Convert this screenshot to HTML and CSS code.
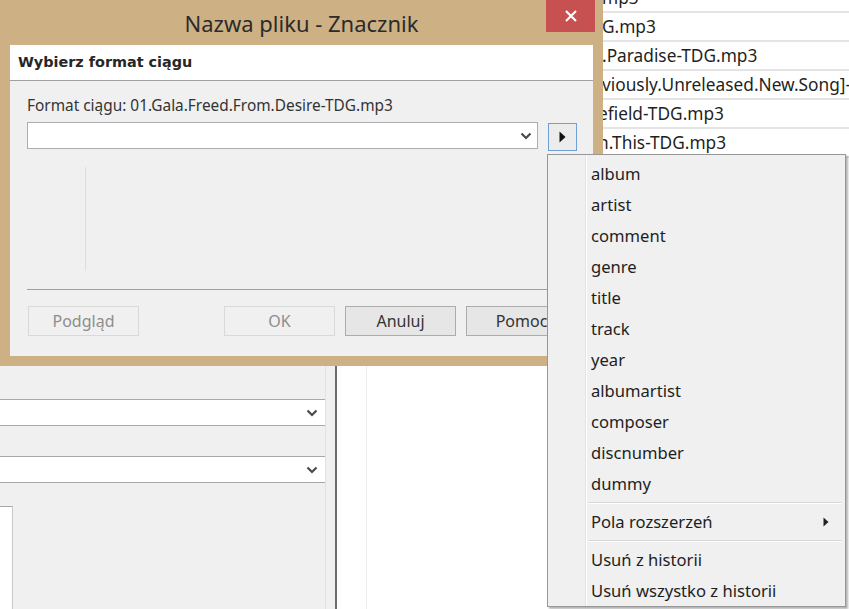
FILE: index.html
```html
<!DOCTYPE html>
<html lang="pl">
<head>
<meta charset="utf-8">
<title>Nazwa pliku - Znacznik</title>
<link rel="stylesheet" href="styles.css">
</head>
<body>
<div class="desktop">
  <div class="app">
    <div class="side">
      <div class="side-combo">
        <svg class="chev" width="12" height="8" viewBox="0 0 12 8"><polyline points="1.5,1.5 6,6 10.5,1.5" fill="none" stroke="#4a4a4a" stroke-width="2.2"/></svg>
      </div>
      <div class="side-combo">
        <svg class="chev" width="12" height="8" viewBox="0 0 12 8"><polyline points="1.5,1.5 6,6 10.5,1.5" fill="none" stroke="#4a4a4a" stroke-width="2.2"/></svg>
      </div>
      <div class="side-box"></div>
    </div>
    <div class="side-gap"></div>
    <div class="splitter"></div>
    <div class="files">
      <div class="files-num"></div>
      <div class="files-list">
        <div class="file-row">mp3</div>
        <div class="file-row">G.mp3</div>
        <div class="file-row">.Paradise-TDG.mp3</div>
        <div class="file-row">viously.Unreleased.New.Song]-TDG.mp3</div>
        <div class="file-row file-row-cut">efield-TDG.mp3</div>
        <div class="file-row file-row-cut">n.This-TDG.mp3</div>
      </div>
    </div>
  </div>

  <div class="dialog">
    <div class="titlebar">
      <span class="title">Nazwa pliku - Znacznik</span>
      <button class="close" aria-label="Zamknij">
        <svg width="14" height="14" viewBox="0 0 14 14"><path d="M2 2 L12 12 M12 2 L2 12" stroke="#fff" stroke-width="2.2" fill="none"/></svg>
      </button>
    </div>
    <div class="dlg-body">
      <div class="dlg-head">Wybierz format ciągu</div>
      <div class="dlg-content">
        <div class="label">Format ciągu: 01.Gala.Freed.From.Desire-TDG.mp3</div>
        <div class="format-row">
          <div class="combo">
            <svg class="chev" width="12" height="8" viewBox="0 0 12 8"><polyline points="1.5,1.5 6,6 10.5,1.5" fill="none" stroke="#4a4a4a" stroke-width="2.2"/></svg>
          </div>
          <button class="arrow-btn" aria-label="Pola">
            <svg width="7" height="12" viewBox="0 0 7 12"><path d="M0.5 0.5 L6.5 6 L0.5 11.5 Z" fill="#111"/></svg>
          </button>
        </div>
        <div class="preview"><div class="preview-line"></div></div>
        <div class="sep"></div>
        <div class="buttons">
          <button class="btn btn-first" disabled>Podgląd</button>
          <button class="btn" disabled>OK</button>
          <button class="btn">Anuluj</button>
          <button class="btn">Pomoc</button>
        </div>
      </div>
    </div>
  </div>

  <div class="menu">
    <div class="menu-item">album</div>
    <div class="menu-item">artist</div>
    <div class="menu-item">comment</div>
    <div class="menu-item">genre</div>
    <div class="menu-item">title</div>
    <div class="menu-item">track</div>
    <div class="menu-item">year</div>
    <div class="menu-item">albumartist</div>
    <div class="menu-item">composer</div>
    <div class="menu-item">discnumber</div>
    <div class="menu-item">dummy</div>
    <div class="menu-sep"></div>
    <div class="menu-item menu-sub">Pola rozszerzeń
      <svg width="6" height="10" viewBox="0 0 6 10"><path d="M0.5 0.5 L5.5 5 L0.5 9.5 Z" fill="#222"/></svg>
    </div>
    <div class="menu-sep"></div>
    <div class="menu-item">Usuń z historii</div>
    <div class="menu-item">Usuń wszystko z historii</div>
  </div>
</div>
</body>
</html>
```

FILE: styles.css
```css
* { box-sizing: border-box; }
html, body { margin: 0; padding: 0; }
body {
  width: 849px;
  height: 609px;
  overflow: hidden;
  font-family: "Noto Sans", "Open Sans", sans-serif;
  color: #222;
  background: #fff;
}
button { font-family: inherit; }

.desktop {
  position: relative;
  width: 849px;
  height: 609px;
  overflow: hidden;
}

/* background application */
.app {
  display: grid;
  grid-template-columns: 326px 9px 2px 1fr;
  height: 609px;
}
.side {
  background: #f0f0f0;
  border-right: 1px solid #e2e2e2;
  padding-top: 399px;
  display: flex;
  flex-direction: column;
}
.side-combo {
  height: 27px;
  background: #fff;
  border-top: 1px solid #a9a9a9;
  border-bottom: 1px solid #a9a9a9;
  display: flex;
  align-items: center;
  justify-content: flex-end;
  padding-right: 7px;
}
.side-combo + .side-combo { margin-top: 30px; }
.side-box {
  margin-top: 23px;
  width: 13px;
  flex: 1;
  background: #fff;
  border-top: 1px solid #a9a9a9;
  border-right: 1px solid #c9c9c9;
}
.side-gap { background: #f0f0f0; }
.splitter { background: #6b6b6b; }
.files {
  display: flex;
  background: #fff;
}
.files-num {
  width: 30px;
  border-right: 1px solid #ececec;
}
.files-list {
  flex: 1;
  margin-top: -16px;
  overflow: hidden;
}
.file-row {
  height: 29px;
  border-bottom: 2px solid #e4e4e4;
  padding-left: 235px;
  font-size: 17.3px;
  line-height: 27px;
  white-space: nowrap;
  color: #1f1f1f;
}
.file-row-cut { padding-left: 231px; }

/* dialog window */
.dialog {
  position: absolute;
  left: 0;
  top: 0;
  width: 603px;
  height: 366px;
  background: #cdb185;
  padding: 0 10px 10px 10px;
  display: flex;
  flex-direction: column;
}
.titlebar {
  height: 45px;
  display: grid;
  grid-template-columns: 1fr auto 1fr;
  margin: 0 -2px;
}
.title {
  grid-column: 2;
  align-self: center;
  font-size: 22px;
  color: #2b2b2b;
  white-space: nowrap;
}
.close {
  grid-column: 3;
  justify-self: end;
  align-self: start;
  width: 49px;
  height: 32px;
  border: 0;
  padding: 0;
  background: #c75050;
  display: flex;
  align-items: center;
  justify-content: center;
}
.dlg-body {
  flex: 1;
  display: flex;
  flex-direction: column;
  background: #f0f0f0;
}
.dlg-head {
  height: 36px;
  background: #fff;
  border-bottom: 1px solid #a0a0a0;
  padding-left: 8px;
  font-family: "DejaVu Sans", sans-serif;
  font-weight: bold;
  font-size: 14.4px;
  line-height: 35px;
  color: #262626;
}
.dlg-content {
  flex: 1;
  padding: 15px 16px 0 17px;
  display: flex;
  flex-direction: column;
}
.label {
  font-size: 15.4px;
  line-height: 20px;
  color: #333;
  white-space: nowrap;
}
.format-row {
  margin-top: 6px;
  display: flex;
  gap: 10px;
  height: 29px;
}
.combo {
  flex: 1;
  height: 27px;
  background: #fff;
  border: 1px solid #abadb3;
  display: flex;
  align-items: center;
  justify-content: flex-end;
  padding-right: 5px;
}
.arrow-btn {
  margin-top: 1px;
  width: 29px;
  height: 28px;
  background: #ececec;
  border: 1px solid #6f9fd6;
  padding: 0;
  display: flex;
  align-items: center;
  justify-content: center;
}
.preview {
  height: 138px;
  padding: 16px 0 18px 58px;
  display: flex;
}
.preview-line {
  width: 1px;
  background: #dedede;
}
.sep {
  height: 1px;
  background: #a0a0a0;
}
.buttons {
  margin-top: 16px;
  display: flex;
  gap: 10px;
}
.btn {
  width: 111px;
  height: 30px;
  font-size: 16px;
  color: #333;
  background: #e6e6e6;
  border: 1px solid #acacac;
  padding: 0;
}
.btn:disabled {
  color: #8d8d8d;
  background: #f0f0f0;
  border-color: #d9d9d9;
}
.btn-first { margin-left: 1px; margin-right: auto; }

/* context menu */
.menu {
  position: absolute;
  left: 547px;
  top: 154px;
  width: 299px;
  height: 453px;
  background: #f0f0f0;
  border: 1px solid #979797;
  box-shadow: 2px 2px 2px rgba(0, 0, 0, 0.3);
  padding: 3px 2px 0 2px;
  background-image: linear-gradient(to right, transparent 37px, #e2e3e3 37px, #e2e3e3 38px, #ffffff 38px, #ffffff 39px, transparent 39px);
  background-origin: padding-box;
}
.menu-item {
  height: 31px;
  padding-left: 41px;
  font-size: 16.6px;
  line-height: 30px;
  color: #1e1e1e;
  white-space: nowrap;
  display: flex;
  align-items: center;
}
.menu-sub { justify-content: space-between; padding-right: 14px; }
.menu-sep {
  height: 7px;
  margin-left: 39px;
  margin-right: 1px;
  display: flex;
  flex-direction: column;
  justify-content: center;
}
.menu-sep::before {
  content: "";
  height: 1px;
  background: #d7d7d7;
  border-bottom: 1px solid #fff;
  box-sizing: content-box;
}
```
